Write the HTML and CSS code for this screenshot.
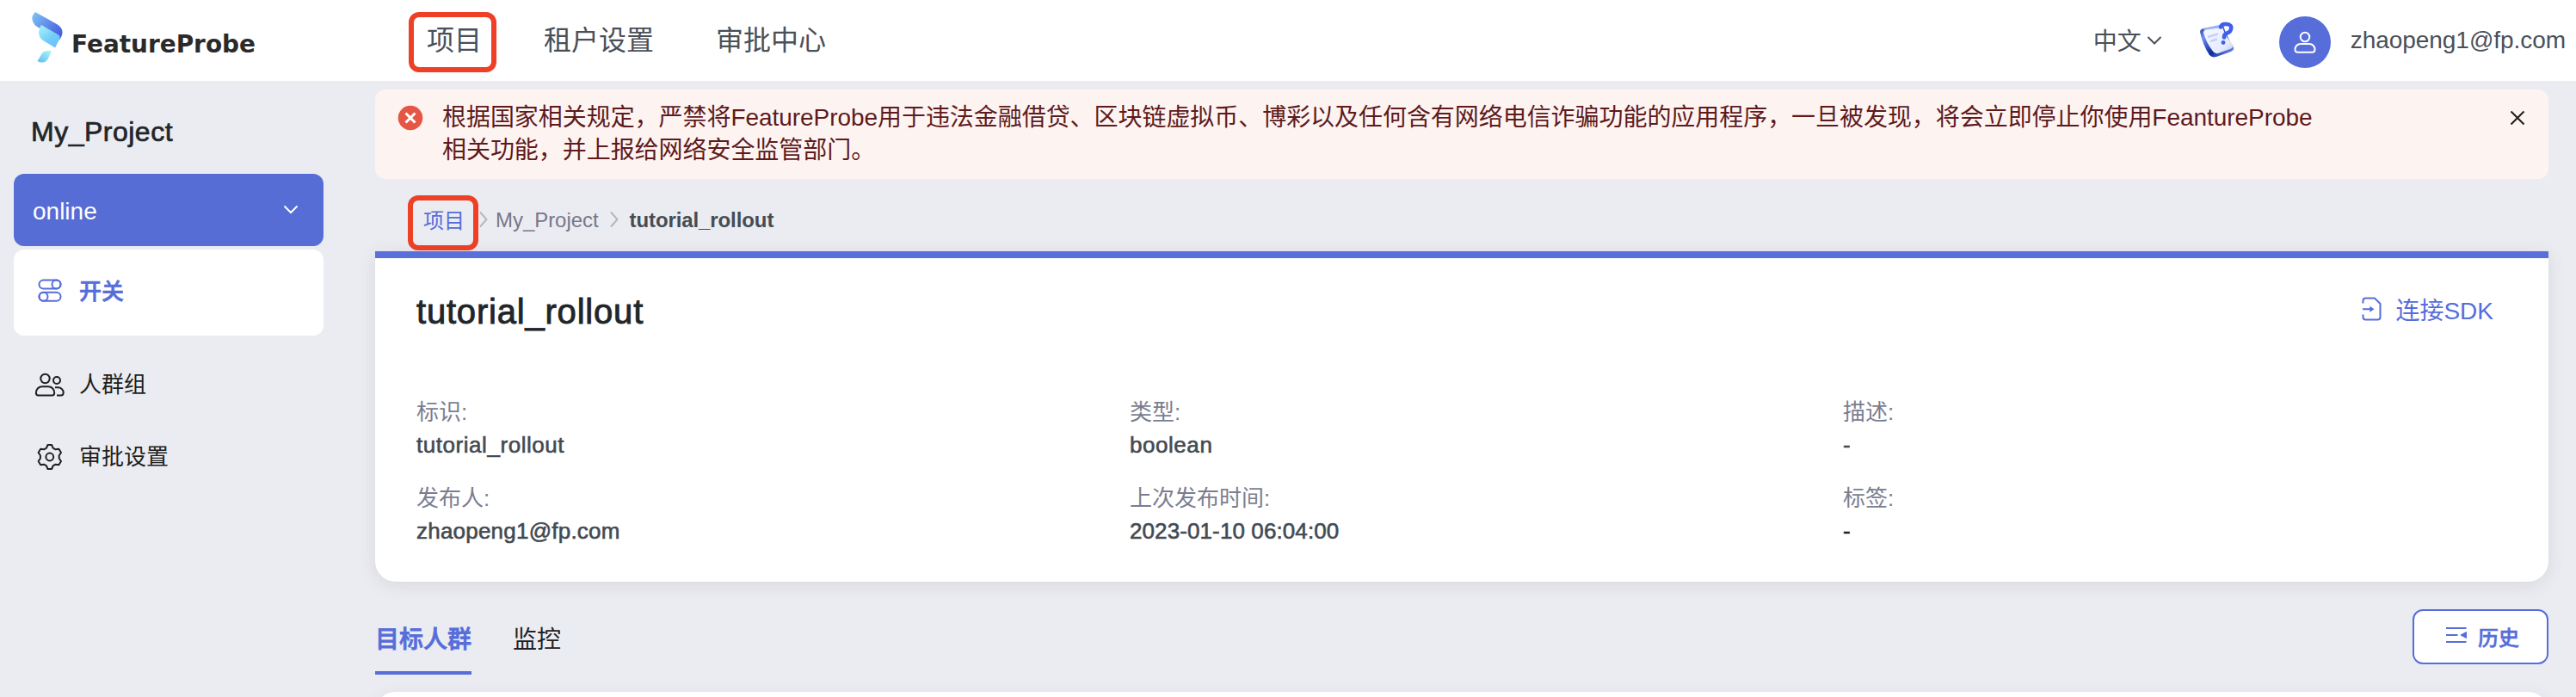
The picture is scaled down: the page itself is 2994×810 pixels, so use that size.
FILE: index.html
```
<!DOCTYPE html>
<html lang="zh-CN">
<head>
<meta charset="utf-8">
<title>FeatureProbe</title>
<link rel="stylesheet" href="styles.css">
</head>
<body>
<header class="header">
  <div class="brand">
    <svg class="logo" width="40" height="62" viewBox="0 0 40 62">
      <defs>
        <linearGradient id="ga" x1="0" y1="0" x2="1" y2=".6"><stop offset="0" stop-color="#7fc4f5"/><stop offset="1" stop-color="#4a63e0"/></linearGradient>
        <linearGradient id="gb" x1=".1" y1="0" x2=".8" y2="1"><stop offset="0" stop-color="#a6f3f6"/><stop offset=".6" stop-color="#72cdf8"/><stop offset="1" stop-color="#6cc0f8"/></linearGradient>
        <linearGradient id="gc" x1=".8" y1="0" x2=".1" y2="1"><stop offset="0" stop-color="#a6f3f6"/><stop offset="1" stop-color="#62bdf6"/></linearGradient>
      </defs>
      <path d="M5 2 30 16Q37 20 36.500 27 36 30 33.500 34L7 19Q1 15 1.300 8 2 5 5 2Z" fill="url(#ga)"/>
      <path d="M12 17 32 28.500Q34.500 30 33 34L28 43.500 14 35Q9 31.500 9 25.500 9.200 21 12 17Z" fill="url(#gb)"/>
      <path d="M24 47.500C19 46.500 15 47 12.500 50.500L7.500 59C12 61.500 17 61 19.500 57Z" fill="url(#gc)"/>
    </svg>
    <svg class="wordmark" width="220" height="44" viewBox="0 0 220 44"><text x="0" y="31" textLength="214" lengthAdjust="spacingAndGlyphs">FeatureProbe</text></svg>
  </div>
  <nav class="nav">
    <a class="nav-item marked">项目</a>
    <a class="nav-item">租户设置</a>
    <a class="nav-item">审批中心</a>
  </nav>
  <div class="account">
    <span class="lang">中文</span>
    <svg class="lang-arrow" width="18" height="12" viewBox="0 0 18 12"><path d="m1.500 2 7.500 7.500L16.500 2" fill="none" stroke="#4a5058" stroke-width="2"/></svg>
    <svg class="help" width="48" height="52" viewBox="0 0 48 52">
      <defs>
        <linearGradient id="gd" x1="0" y1="0" x2="1" y2="1"><stop offset="0" stop-color="#f7f9ff"/><stop offset=".7" stop-color="#e6ebff"/><stop offset="1" stop-color="#b9c6fa"/></linearGradient>
        <linearGradient id="ge" x1="0" y1="0" x2="1" y2="1"><stop offset="0" stop-color="#1c3489"/><stop offset=".25" stop-color="#6f90f5"/><stop offset=".6" stop-color="#0b2a9c"/><stop offset="1" stop-color="#8fabff"/></linearGradient>
      </defs>
      <path d="M4 16Q4 13 8 12L31 8Q34 20 43 34 44 37 40 39L23 45Q18 46.500 15 43 7 31 4 16Z" fill="url(#ge)"/>
      <path d="M8 12 26 8 30 12 10 17Z" fill="#9cb2f8"/>
      <path d="M8 17Q8 14 12 13.500L30 11Q34 22 43 32 43 34 39 36L25 41Q21 42 18.500 38 11 28 8 17Z" fill="url(#gd)"/>
      <path d="m13 22 12-3.500M16 27l8-2.500" stroke="#c6d1fb" stroke-width="2.500"/>
      <path d="M28 10.500Q29 6.500 34.500 7 41.500 7.500 40 13 39 16.500 35.500 17.500 32 18.500 32 22.500" fill="none" stroke="#3f5fea" stroke-width="4.600" stroke-linecap="round"/>
      <circle cx="31" cy="28.500" r="2.400" fill="#3f5fea"/>
    </svg>
    <span class="avatar">
      <svg width="28" height="28" viewBox="0 0 28 28" fill="none" stroke="#fff" stroke-width="2"><circle cx="14" cy="8" r="5.300"/><path d="M9 16h10c4 0 6.500 3 6.500 6.500 0 2.200-1.200 3.200-3 3.200h-17c-1.800 0-3-1-3-3.200C2.500 19 5 16 9 16Z"/></svg>
    </span>
    <span class="email">zhaopeng1@fp.com</span>
  </div>
</header>
<div class="body">
  <aside class="side">
    <h2 class="project">My_Project</h2>
    <div class="env"><span>online</span>
      <svg width="18" height="12" viewBox="0 0 18 12"><path d="m1.500 1.500 7.500 7.500 7.500-7.500" fill="none" stroke="#fff" stroke-width="2"/></svg>
    </div>
    <a class="menu active">
      <svg width="36" height="32" viewBox="0 0 36 32" fill="none" stroke="currentColor" stroke-width="2"><rect x="5.500" y="3.500" width="25" height="10" rx="5"/><circle cx="25.500" cy="8.500" r="5"/><rect x="5.500" y="17.700" width="25" height="10" rx="5"/><circle cx="10.500" cy="22.700" r="5"/></svg>
      <span>开关</span>
    </a>
    <a class="menu">
      <svg width="36" height="32" viewBox="0 0 36 32" fill="none" stroke="currentColor" stroke-width="2"><circle cx="12.500" cy="9" r="5.200"/><circle cx="26" cy="11" r="4"/><path d="M9 18.300h7c4 0 7.200 3 7.200 7.200 0 2-1 3-2.500 3H4.500c-1.700 0-2.600-1-2.600-3 0-4.200 3.100-7.200 7.100-7.200ZM24 19.300h3.500c3.200 0 6.200 2.300 6.200 6 0 2.200-1 3.200-2.700 3.200h-5"/></svg>
      <span>人群组</span>
    </a>
    <a class="menu">
      <svg width="36" height="32" viewBox="0 0 36 32" fill="none" stroke="currentColor" stroke-width="2" stroke-linejoin="round"><circle cx="17.800" cy="16" r="4.400"/><path d="M15.500 2h4.600l1.500 3.600 2.900 1.700 3.900-.5L31 11l-2.300 3.300v3.400L31 21l-2.600 4.200-3.900-.5-2.900 1.700-1.500 3.600h-4.600L14 26.400l-2.900-1.700-3.900.5L4.600 21l2.300-3.300v-3.400L4.600 11l2.600-4.200 3.900.5L14 5.600Z"/></svg>
      <span>审批设置</span>
    </a>
  </aside>
  <main class="main">
    <section class="alert">
      <svg class="alert-icon" width="30" height="30" viewBox="0 0 30 30"><circle cx="15" cy="15" r="14.300" fill="#e55644"/><path d="m9.500 9.500 11 11m0-11-11 11" stroke="#fff" stroke-width="3"/></svg>
      <p class="alert-text">根据国家相关规定，严禁将FeatureProbe用于违法金融借贷、区块链虚拟币、博彩以及任何含有网络电信诈骗功能的应用程序，一旦被发现，将会立即停止你使用FeantureProbe<br>相关功能，并上报给网络安全监管部门。</p>
      <svg class="close" width="18" height="18" viewBox="0 0 18 18"><path d="m1.500 1.500 15 15m0-15-15 15" stroke="#1c1c1c" stroke-width="2"/></svg>
    </section>
    <nav class="crumbs">
      <a class="crumb-home marked">项目</a>
      <svg class="sep first" width="12" height="20" viewBox="0 0 12 20"><path d="m2 1.500 7.500 8.500L2 18.500" fill="none" stroke="#b4b7bd" stroke-width="2"/></svg>
      <a class="crumb">My_Project</a>
      <svg class="sep" width="12" height="20" viewBox="0 0 12 20"><path d="m2 1.500 7.500 8.500L2 18.500" fill="none" stroke="#b4b7bd" stroke-width="2"/></svg>
      <b class="crumb-now">tutorial_rollout</b>
    </nav>
    <section class="card">
      <div class="card-head">
        <h1 class="title">tutorial_rollout</h1>
        <a class="sdk">
          <svg width="24" height="28" viewBox="0 0 24 28" fill="none" stroke="currentColor" stroke-width="2"><path d="M1.500 7.500V4.500Q1.500 1.500 4.500 1.500H15L21.500 8V23.500Q21.500 26.500 18.500 26.500H4.500Q1.500 26.500 1.500 23.500V20.500M1 14.200H10"/><path d="m9.300 10.700 5.200 3.500-5.200 3.500Z" fill="currentColor" stroke="none"/></svg>
          <span>连接SDK</span>
        </a>
      </div>
      <dl class="info">
        <div><dt>标识:</dt><dd class="wide">tutorial_rollout</dd></div>
        <div><dt>类型:</dt><dd class="wide">boolean</dd></div>
        <div><dt>描述:</dt><dd>-</dd></div>
        <div><dt>发布人:</dt><dd>zhaopeng1@fp.com</dd></div>
        <div><dt>上次发布时间:</dt><dd class="time">2023-01-10 06:04:00</dd></div>
        <div><dt>标签:</dt><dd class="dark">-</dd></div>
      </dl>
    </section>
    <div class="tabs">
      <a class="tab current">目标人群</a>
      <a class="tab">监控</a>
      <button class="history">
        <svg width="26" height="20" viewBox="0 0 26 20"><path d="M1 2h23.500M1 10h13.500M1 18h23.500" stroke="currentColor" stroke-width="2"/><path d="M24.500 6.500v7L18 10Z" fill="currentColor" stroke="currentColor" stroke-linejoin="round"/></svg>
        <span>历史</span>
      </button>
    </div>
    <section class="next"></section>
  </main>
</div>
</body>
</html>
```
FILE: styles.css
```
* { box-sizing: border-box; }
html, body { margin: 0; height: 810px; overflow: hidden; }
body {
  background: #ebecf1;
  color: #212529;
  font-family: "Liberation Sans", "Noto Sans CJK SC", sans-serif;
  display: flex;
  flex-direction: column;
}
h1, h2, p, dl, dd { margin: 0; }
svg { display: block; flex: none; }
span, a, b { white-space: nowrap; }

.header { height: 94px; flex: none; background: #fff; display: flex; align-items: center; }
.brand { width: 475px; height: 94px; display: flex; padding: 12px 0 0 36px; }
.wordmark { margin: 18px 0 0 7px; overflow: visible; }
.wordmark text { font: bold 29px "DejaVu Sans", sans-serif; fill: #2a2a2b; }
.nav { display: flex; align-items: center; font-size: 32px; color: #4a5058; height: 94px; }
.nav-item { line-height: 46px; margin-right: 72px; }
.nav-item:last-child { margin-right: 0; }
.nav .marked { width: 102px; height: 70px; line-height: 54px; padding-left: 15px; margin: 3px 55px 0 0; }
.marked { border: 6px solid #ee4027; border-radius: 12px; }
.account { margin-left: auto; padding-right: 12px; display: flex; align-items: center; font-size: 28px; color: #4a5058; }
.lang { margin-top: -3px; }
.lang-arrow { margin: 0 0 0 6px; }
.help { margin-left: 40px; }
.avatar { width: 60px; height: 60px; border-radius: 50%; background: #566dda; margin: 4px 23px 0 48px; display: flex; align-items: center; justify-content: center; }
.email { letter-spacing: -.05px; }

.body { flex: 1; min-height: 0; display: flex; overflow: hidden; }
.side { width: 436px; flex: none; padding: 41px 60px 0 16px; display: flex; flex-direction: column; }
.project { padding-left: 20px; font-size: 32px; line-height: 36px; font-weight: 400; letter-spacing: .5px; -webkit-text-stroke: .7px; margin-bottom: 31px; }
.env { height: 84px; flex: none; border-radius: 12px; background: #566dd6; color: #fff; font-size: 28px; display: flex; align-items: center; justify-content: space-between; padding: 3px 29px 0 22px; margin-bottom: 4px; }
.env svg { margin-top: -3px; }
.menu { height: 84px; flex: none; display: flex; align-items: center; gap: 16px; padding-left: 24px; font-size: 26px; color: #1f1f20; }
.menu span { margin-top: -5px; }
.menu.active { height: 100px; background: #fff; border-radius: 12px; color: #566dda; font-weight: 500; padding-bottom: 4px; margin-bottom: 15px; }
.menu.active span { margin-top: -4px; -webkit-text-stroke: .6px; }
.main { width: 2526px; display: flex; flex-direction: column; }
.alert { height: 104px; flex: none; margin-top: 10px; background: #fdf4f2; border-radius: 12px; display: flex; padding: 14px 27px 0 26px; }
.alert-icon { margin-top: 4px; }
.alert-text { margin-left: 22px; font-size: 28px; line-height: 38px; letter-spacing: -.05px; color: #5f1a1c; white-space: nowrap; }
.close { margin: 10px 0 0 auto; }
.crumbs { display: flex; height: 84px; flex: none; padding: 17px 0 0 38px; font-size: 24px; align-items: flex-start; color: #767789; line-height: 28px; }
.crumb-home { width: 82px; height: 64px; padding-left: 12px; line-height: 48px; color: #566dda; margin-top: 2px; }
.sep { margin: 20px 12px 0 12px; }
.sep.first { margin: 20px 8px 0 0; }
.crumb, .crumb-now { margin-top: 17px; }
.crumb { letter-spacing: -.05px; }
.crumb-now { color: #454c54; letter-spacing: -.1px; }
.card { height: 384px; flex: none; background: #fff; border-top: 8px solid #586fdc; border-radius: 0 0 24px 24px; box-shadow: 0 4px 20px rgba(80, 70, 100, .12); padding: 0 64px 0 48px; }
.card-head { display: flex; justify-content: space-between; height: 160px; }
.title { font-size: 40px; line-height: 46px; font-weight: 400; letter-spacing: .8px; -webkit-text-stroke: .9px; margin-top: 39px; }
.sdk { display: flex; gap: 15px; font-size: 28px; line-height: 40px; color: #566dda; margin-top: 42px; }
.sdk svg { margin-top: 3px; }
.info { display: grid; grid-template-columns: repeat(3, 829px); grid-auto-rows: 100px; font-size: 26px; }
dt { line-height: 38px; color: #7b7e90; }
dd { line-height: 38px; color: #434a52; letter-spacing: .22px; -webkit-text-stroke: .6px; }
.wide { letter-spacing: .55px; }
.time { letter-spacing: .1px; }
.dark { color: #222; }
.tabs { display: flex; height: 128px; flex: none; padding-top: 32px; font-size: 28px; }
.tab { height: 76px; line-height: 71px; color: #202124; margin-right: 48px; }
.tab.current { color: #566dda; font-weight: 500; -webkit-text-stroke: .8px; border-bottom: 4px solid #566dda; }
.history { width: 158px; height: 64px; margin-left: auto; border: 2px solid #566dda; border-radius: 12px; background: #fff; color: #566dda; font: 500 24px "Liberation Sans", "Noto Sans CJK SC", sans-serif; display: flex; align-items: center; gap: 12px; padding: 0 0 0 36px; }
.history svg { margin-top: -4px; }
.history span { -webkit-text-stroke: .5px; margin-top: -1px; }
.next { height: 60px; flex: none; background: #fff; border-radius: 24px; box-shadow: 0 4px 20px rgba(80, 70, 100, .08); }
```
